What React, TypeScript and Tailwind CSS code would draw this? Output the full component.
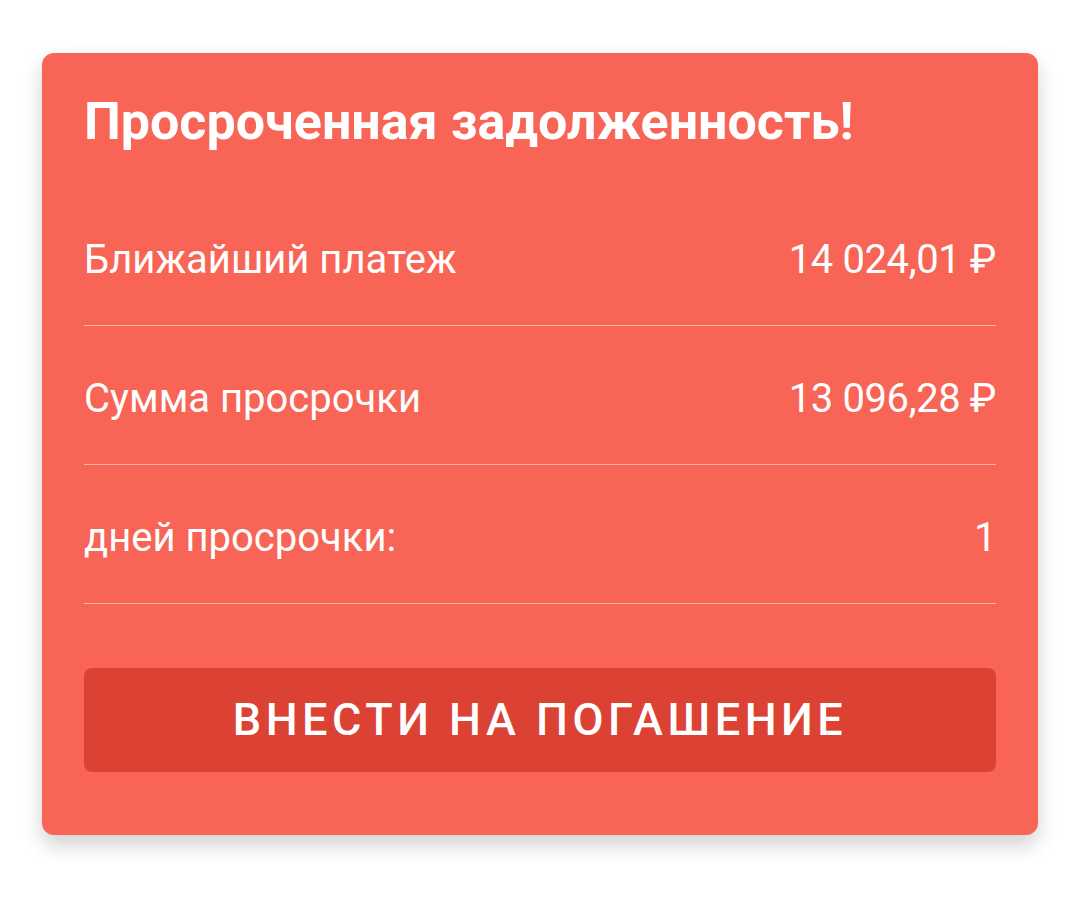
export default function App() {
  const rows = [
    { label: "Ближайший платеж", value: "14 024,01 ₽" },
    { label: "Сумма просрочки", value: "13 096,28 ₽" },
    { label: "дней просрочки:", value: "1" },
  ]

  return (
    <div className="min-h-screen bg-white pt-[53px] px-[42px] font-['Roboto',sans-serif]">
      <div className="w-[996px] rounded-[12px] bg-[#f86455] px-[42px] pt-[38px] pb-[63px] text-white shadow-[0_10px_20px_rgba(0,0,0,0.18)]">
        <h1 className="text-[52px] font-bold leading-[62px]">
          Просроченная задолженность!
        </h1>

        {/* Rows */}
        <div className="mt-[34px]">
          {rows.map((row) => (
            <div
              key={row.label}
              className="flex h-[139px] items-center justify-between border-b border-white/50 pt-[8px] text-[40px] leading-[48px]"
            >
              <span>{row.label}</span>
              <span className="tracking-[-0.4px]">{row.value}</span>
            </div>
          ))}
        </div>

        <button className="mt-[64px] flex h-[104px] w-full items-center justify-center rounded-[8px] bg-[#db4234] text-[45px] font-medium tracking-[4.5px] text-white">
          ВНЕСТИ НА ПОГАШЕНИЕ
        </button>
      </div>
    </div>
  )
}
